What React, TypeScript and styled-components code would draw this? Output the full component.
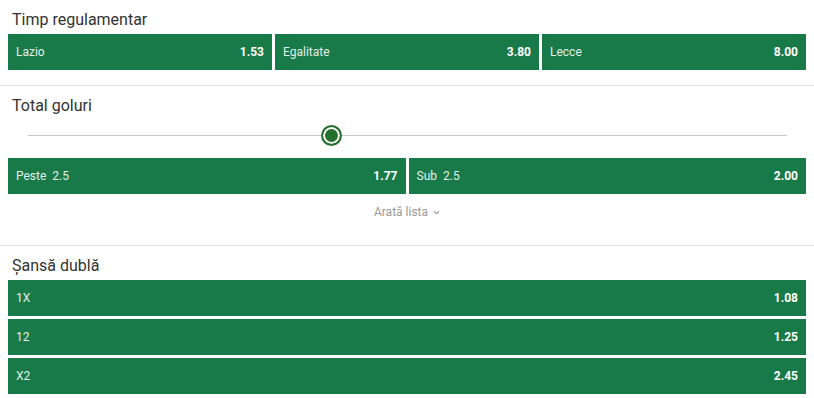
import React from "react";
import styled, { createGlobalStyle } from "styled-components";

const Global = createGlobalStyle`
  html, body { margin: 0; padding: 0; background: #fff; }
  body { font-family: Roboto, "Liberation Sans", Arial, sans-serif; }
  * { box-sizing: border-box; }
`;

const Page = styled.div`
  width: 814px;
  display: flex;
  flex-direction: column;
`;

const Section = styled.section<{ $last?: boolean }>`
  padding: 0 8px ${(p) => (p.$last ? "4px" : "15px")};
  border-bottom: ${(p) => (p.$last ? "none" : "1px solid #e2e2e2")};
`;

const Title = styled.h2`
  margin: 0;
  padding: 10px 4px 4px;
  font-size: 16px;
  line-height: 20px;
  font-weight: 400;
  color: #333;
`;

const Grid = styled.div<{ $cols: number }>`
  display: grid;
  grid-template-columns: repeat(${(p) => p.$cols}, 1fr);
  gap: 3px;
`;

const OddButton = styled.button`
  height: 36px;
  border: 0;
  margin: 0;
  padding: 0 8px;
  background: #187a48;
  display: flex;
  align-items: center;
  justify-content: space-between;
  font-family: Roboto, "Liberation Sans", Arial, sans-serif;
  cursor: pointer;
`;

const Label = styled.span`
  display: flex;
  gap: 6px;
  font-size: 12px;
  color: #e4efe8;
`;

const Odd = styled.span`
  font-size: 12px;
  font-weight: 700;
  color: #fff;
`;

const SliderRow = styled.div`
  height: 30px;
  padding: 0 19px 0 20px;
  margin-bottom: 8px;
  display: flex;
  align-items: center;
`;

const Track = styled.div`
  position: relative;
  flex: 1;
  height: 1px;
  background: #c8c8c8;
`;

const Knob = styled.div`
  position: absolute;
  top: 50%;
  width: 21px;
  height: 21px;
  margin: -10.5px 0 0 -10.5px;
  border-radius: 50%;
  background: #24702c;
  border: 2px solid #24702c;
  box-shadow: inset 0 0 0 2px #fff;
`;

const ShowMore = styled.div`
  height: 36px;
  display: flex;
  align-items: center;
  justify-content: center;
  gap: 5px;
  font-size: 12px;
  color: #9a9a9a;
`;

const Row = styled.div`
  display: flex;
  flex-direction: column;
  gap: 3px;
`;

type Sel = { label: string; line?: string; odd: string };

const Bet = ({ label, line, odd }: Sel) => (
  <OddButton>
    <Label>
      <span>{label}</span>
      {line && <span>{line}</span>}
    </Label>
    <Odd>{odd}</Odd>
  </OddButton>
);

export default function App() {
  return (
    <Page>
      <Global />
      <Section>
        <Title>Timp regulamentar</Title>
        <Grid $cols={3}>
          <Bet label="Lazio" odd="1.53" />
          <Bet label="Egalitate" odd="3.80" />
          <Bet label="Lecce" odd="8.00" />
        </Grid>
      </Section>
      <Section>
        <Title>Total goluri</Title>
        <SliderRow>
          <Track>
            <Knob style={{ left: "40%" }} />
          </Track>
        </SliderRow>
        <Grid $cols={2}>
          <Bet label="Peste" line="2.5" odd="1.77" />
          <Bet label="Sub" line="2.5" odd="2.00" />
        </Grid>
        <ShowMore>
          <span>Arată lista</span>
          <svg width="7" height="5" viewBox="0 0 7 5">
            <path d="M1 1.2 L3.5 3.6 L6 1.2" fill="none" stroke="#a0a0a0" strokeWidth="1.2" />
          </svg>
        </ShowMore>
      </Section>
      <Section $last>
        <Title>Șansă dublă</Title>
        <Row>
          <Bet label="1X" odd="1.08" />
          <Bet label="12" odd="1.25" />
          <Bet label="X2" odd="2.45" />
        </Row>
      </Section>
    </Page>
  );
}
